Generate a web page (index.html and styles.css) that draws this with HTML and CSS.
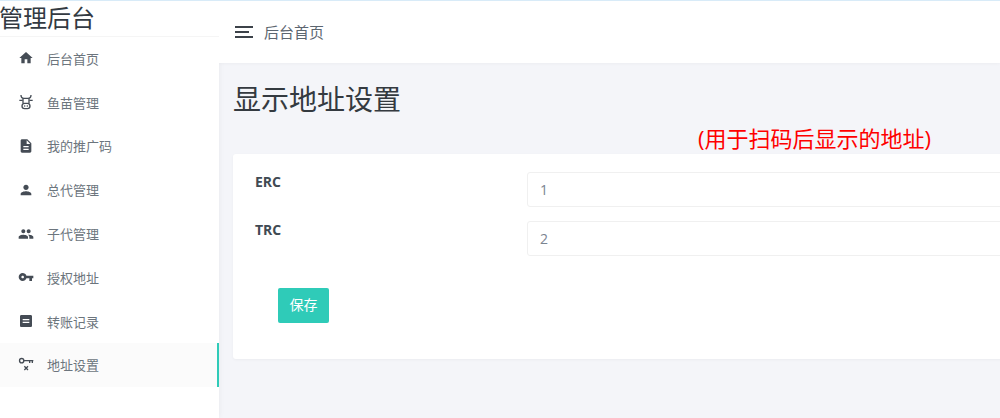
FILE: index.html
```html
<!DOCTYPE html>
<html lang="zh-CN">
<head>
    <meta charset="UTF-8">
    <meta name="viewport" content="width=device-width, initial-scale=1.0">
    <title>管理后台</title>
    <link rel="stylesheet" href="styles.css">
</head>
<body>
    <div class="wrapper">
        <aside class="sidebar">
            <div class="logo">管理后台</div>
            <ul class="menu">
                <li class="menu-item">
                    <svg class="menu-icon" viewBox="0 0 24 24"><path d="M10 20v-6h4v6h5v-8h3L12 3 2 12h3v8z"/></svg>
                    <span>后台首页</span>
                </li>
                <li class="menu-item">
                    <svg class="menu-icon" viewBox="0 0 24 24"><g class="icon-line"><path d="M4.500 1.500c0 3.500 2 5 4.500 5h6c2.500 0 4.500-1.500 4.500-5"/><path d="M2 9.500h5M17 9.500h5"/><path d="M7.500 6.500v7.500M16.500 6.500v7.500"/><rect x="6" y="14" width="12" height="8" rx="4"/></g><circle cx="10" cy="18" r="1.200"/><circle cx="14" cy="18" r="1.200"/></svg>
                    <span>鱼苗管理</span>
                </li>
                <li class="menu-item">
                    <svg class="menu-icon" viewBox="0 0 24 24"><path d="M14 2H6c-1.100 0-2 .9-2 2v16c0 1.100.9 2 2 2h12c1.100 0 2-.9 2-2V8l-6-6zm2 16H8v-2h8v2zm0-4H8v-2h8v2zm-3-5V3.500L18.500 9H13z"/></svg>
                    <span>我的推广码</span>
                </li>
                <li class="menu-item">
                    <svg class="menu-icon" viewBox="0 0 24 24"><path d="M12 12c2.200 0 4-1.800 4-4s-1.800-4-4-4-4 1.800-4 4 1.800 4 4 4zm0 2c-2.700 0-8 1.300-8 4v2h16v-2c0-2.700-5.300-4-8-4z"/></svg>
                    <span>总代管理</span>
                </li>
                <li class="menu-item">
                    <svg class="menu-icon" viewBox="0 0 24 24"><path d="M16 11c1.700 0 3-1.300 3-3s-1.300-3-3-3-3 1.300-3 3 1.300 3 3 3zm-8 0c1.700 0 3-1.300 3-3S9.700 5 8 5 5 6.300 5 8s1.300 3 3 3zm0 2c-2.300 0-7 1.200-7 3.500V19h14v-2.500C15 14.200 10.300 13 8 13zm8 0c-.3 0-.6 0-1 .1 1.200.8 2 1.900 2 3.400V19h6v-2.500c0-2.300-4.700-3.500-7-3.500z"/></svg>
                    <span>子代管理</span>
                </li>
                <li class="menu-item">
                    <svg class="menu-icon" viewBox="0 0 24 24"><path d="M12.650 10C11.830 7.670 9.610 6 7 6c-3.310 0-6 2.690-6 6s2.690 6 6 6c2.610 0 4.830-1.670 5.650-4H17v4h4v-4h2v-4H12.650zM7 14c-1.100 0-2-.9-2-2s.9-2 2-2 2 .9 2 2-.9 2-2 2z"/></svg>
                    <span>授权地址</span>
                </li>
                <li class="menu-item">
                    <svg class="menu-icon" viewBox="0 0 24 24"><path d="M19 3H5c-1.100 0-2 .9-2 2v14c0 1.100.9 2 2 2h14c1.100 0 2-.9 2-2V5c0-1.100-.9-2-2-2zm-2 12H7v-2h10v2zm0-4H7V9h10v2z"/></svg>
                    <span>转账记录</span>
                </li>
                <li class="menu-item active">
                    <svg class="menu-icon" viewBox="0 0 24 24"><g class="icon-line"><circle cx="5.500" cy="5.500" r="3.200"/><path d="M8.700 5.500H23M17.500 5.500v3.500M21.500 5.500v3.500"/><path d="M9.500 14l5.500 5.500M15 14l-5.500 5.500"/></g></svg>
                    <span>地址设置</span>
                </li>
            </ul>
        </aside>
        <div class="main">
            <header class="topbar">
                <div class="burger"><i></i><i></i><i></i></div>
                <span class="crumb">后台首页</span>
            </header>
            <div class="content">
                <h1 class="page-title">显示地址设置</h1>
                <p class="note">(用于扫码后显示的地址)</p>
                <div class="card">
                    <div class="form-row">
                        <label class="form-label">ERC</label>
                        <input class="form-input" type="text" value="1">
                    </div>
                    <div class="form-row">
                        <label class="form-label">TRC</label>
                        <input class="form-input" type="text" value="2">
                    </div>
                    <button class="save-btn">保存</button>
                </div>
            </div>
        </div>
    </div>
</body>
</html>
```

FILE: styles.css
```css
*{
    margin:0;
    padding:0;
    box-sizing:border-box;
}
html,body{
    height:100%;
    overflow:hidden;
}
body{
    font-family:"Open Sans","Noto Sans CJK SC",sans-serif;
    background-color:#f4f5f9;
    border-top:1px solid #d8ebf8;
}
.wrapper{
    display:flex;
    height:417px;
}
.sidebar{
    width:219px;
    flex-shrink:0;
    background-color:#fff;
    box-shadow:0 0 6px rgba(0,0,0,.06);
}
.logo{
    height:36px;
    font-size:24px;
    line-height:34px;
    text-indent:-1px;
    color:#333a42;
    border-bottom:1px solid #f5f5f5;
    white-space:nowrap;
}
.menu{
    list-style:none;
    margin-top:-.5px;
}
.menu-item{
    height:43.8px;
    display:flex;
    align-items:center;
    padding-left:18px;
    font-size:13px;
    color:#6c757d;
}
.menu-item.active{
    background-color:#fbfbfb;
    border-right:2px solid #2fcbb8;
}
.menu-icon{
    width:16px;
    height:16px;
    margin-right:13px;
    fill:#454c55;
    flex-shrink:0;
}
.icon-line{
    fill:none;
    stroke:#454c55;
    stroke-width:2;
}
.main{
    flex:1;
    min-width:0;
    overflow:hidden;
}
.topbar{
    height:62px;
    background-color:#fff;
    display:flex;
    align-items:center;
    padding-left:16px;
    box-shadow:0 1px 3px rgba(0,0,0,.03);
}
.burger{
    width:18px;
    margin:0 11px 0 0;
}
.burger i{
    display:block;
    height:2px;
    background-color:#3c4249;
    margin-bottom:3px;
}
.burger i:nth-child(2){
    width:14px;
}
.burger i:last-child{
    margin-bottom:0;
}
.crumb{
    font-size:15px;
    color:#5c6670;
    padding-bottom:2px;
}
.content{
    padding:15px 0 0 14px;
}
.page-title{
    font-size:28px;
    font-weight:400;
    line-height:42px;
    color:#343a40;
}
.note{
    font-size:22px;
    line-height:28px;
    color:#f00;
    margin-left:465px;
    margin-top:4px;
    white-space:nowrap;
}
.card{
    width:800px;
    height:205px;
    margin-top:2px;
    background-color:#fff;
    border-radius:3px;
    padding:18px 22px;
    box-shadow:0 1px 3px rgba(0,0,0,.04);
}
.form-row{
    display:flex;
    margin-bottom:14px;
}
.form-label{
    width:272px;
    flex-shrink:0;
    font-size:14px;
    font-weight:700;
    line-height:20px;
    color:#414a53;
}
.form-input{
    width:500px;
    height:35px;
    border:1px solid #f0f0f0;
    border-radius:3px;
    padding:0 12px;
    font-family:inherit;
    font-size:14px;
    color:#7b8490;
    outline:none;
}
.form-row:nth-child(2) .form-label{
    margin-top:-1px;
}
.save-btn{
    display:block;
    width:51px;
    height:35px;
    margin:32px 0 0 23px;
    padding-bottom:3px;
    border:none;
    border-radius:2px;
    background-color:#2fcbb8;
    color:#fff;
    font-family:inherit;
    font-size:14px;
}
```
